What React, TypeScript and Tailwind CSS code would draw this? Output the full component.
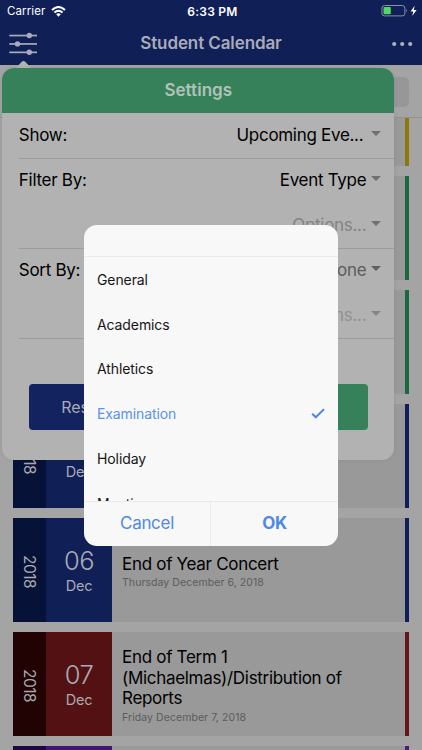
import type { ReactNode } from "react";

type Event = {
  day: string;
  title: string;
  date: string;
  year: string;
  tile: string;
  bar: string;
};

const events: Event[] = [
  { day: "03", title: "", date: "", year: "bg-[#4a4000]", tile: "bg-[#8b7a0b]", bar: "bg-[#8b7a0b]" },
  { day: "04", title: "", date: "", year: "bg-[#0a3a20]", tile: "bg-[#1d693f]", bar: "bg-[#1d693f]" },
  { day: "04", title: "", date: "", year: "bg-[#0a3a20]", tile: "bg-[#1d693f]", bar: "bg-[#1d693f]" },
  { day: "05", title: "", date: "", year: "bg-[#071238]", tile: "bg-[#101f56]", bar: "bg-[#101f5a]" },
  { day: "06", title: "End of Year Concert", date: "Thursday December 6, 2018", year: "bg-[#071238]", tile: "bg-[#101f56]", bar: "bg-[#101f5a]" },
  { day: "07", title: "End of Term 1 (Michaelmas)/Distribution of Reports", date: "Friday December 7, 2018", year: "bg-[#220304]", tile: "bg-[#541113]", bar: "bg-[#641719]" },
  { day: "08", title: "", date: "", year: "bg-[#1d083f]", tile: "bg-[#431577]", bar: "bg-[#4b1785]" },
];

function EventCard({ event }: { event: Event }) {
  return (
    <div className="flex h-[104px] shrink-0 bg-[#999999]">
      <div className={`flex w-[33px] items-center justify-center pt-[2px] pr-[1px] ${event.year}`}>
        <span className="text-[15.5px] leading-none tracking-[-0.5px] text-[#a9a9ad] [writing-mode:vertical-rl]">2018</span>
      </div>
      <div className={`flex w-[66px] flex-col items-center pt-[27px] text-[#a9aab2] ${event.tile}`}>
        <span className="text-[25.5px] leading-[31px] font-light tracking-[-0.5px]">{event.day}</span>
        <span className="mt-[1px] text-[14.5px] leading-[18px] tracking-[-0.3px]">Dec</span>
      </div>
      <div className="flex flex-1 flex-col justify-center pt-[4.5px] pr-8 pl-[10px]">
        <div className="text-[17px] leading-[20.5px] tracking-[-0.3px] text-black">{event.title}</div>
        <div className="text-[10.5px] leading-[17px] tracking-[0.07px] text-[#5c5c5c]">{event.date}</div>
      </div>
      <div className={`w-[4px] ${event.bar}`} />
    </div>
  );
}

type SettingRowProps = { label?: string; value: string; tone?: string; arrow?: string; gap?: string };

function SettingRow({ label, value, tone = "text-black", arrow = "text-[#707070]", gap = "ml-[5px]" }: SettingRowProps) {
  return (
    <div className="flex h-[45px] items-center pt-px pr-[13px]">
      <span className="flex-1 text-[17px] tracking-[-0.28px] text-black">{label}</span>
      <span className={`text-[17px] tracking-[-0.3px] ${tone}`}>{value}</span>
      <svg className={`mb-[5px] ${gap} ${arrow}`} width="10" height="5" viewBox="0 0 10 5">
        <path d="M0 0H10L5 5Z" fill="currentColor" />
      </svg>
    </div>
  );
}

function Group({ children }: { children: ReactNode }) {
  return <div className="-mb-px ml-[16.5px] border-b border-[#9c9ca0]">{children}</div>;
}

const options = ["General", "Academics", "Athletics", "Examination", "Holiday", "Meeting"];

function StatusBar() {
  return (
    <div className="grid h-[22px] grid-cols-3 items-center px-[7px] text-[11.5px] text-white">
      <div className="flex items-center gap-[5px] pt-px">
        <span className="tracking-[0.12px]">Carrier</span>
        <svg width="15" height="11" viewBox="0 0 15 11" fill="none" stroke="white" strokeWidth="2">
          <path d="M1 4Q7.5-2 14 4" />
          <path d="M3.4 6.5Q7.5 2.9 11.6 6.5" />
          <path d="M5.2 8.2Q7.5 6.2 9.8 8.2L7.5 10.7Z" fill="white" stroke="none" />
        </svg>
      </div>
      <span className="pt-px pl-[3px] text-center text-[12px] font-semibold tracking-[0.25px]">6:33 PM</span>
      <div className="flex items-center justify-end">
        <svg className="-mr-[3px]" width="37" height="12" viewBox="0 0 37 12">
          <rect x=".9" y=".5" width="23" height="10.4" rx="2.7" fill="none" stroke="#8990ac" />
          <rect x="2.5" y="2.1" width="7.3" height="7.2" rx="1" fill="#4fd864" />
          <path d="M25.2 3.8Q27 5.7 25.2 7.6Z" fill="#8990ac" />
          <path d="M33.6.8L29.6 6.5H32.3L31.2 11L35.6 4.9H32.8Z" fill="white" />
        </svg>
      </div>
    </div>
  );
}

export default function App() {
  return (
    <div className="relative h-[750px] w-[422px] overflow-hidden bg-[#a4a4a4] font-['Inter','Liberation_Sans',sans-serif]">
      <div className="flex h-full flex-col">
        <header className="h-[65px] shrink-0 bg-[#101f56]">
          <StatusBar />
          <div className="grid h-[43px] grid-cols-[60px_1fr_60px] items-center">
            <svg className="ml-[9px]" width="29" height="24" viewBox="0 0 29 24" fill="#a9abb8">
              <rect x=".3" y="2.7" width="27.7" height="1.7" />
              <rect x=".3" y="11.1" width="27.7" height="1.7" />
              <rect x=".3" y="19.5" width="27.7" height="1.7" />
              <circle cx="20.3" cy="3.5" r="2.7" />
              <circle cx="8.5" cy="11.9" r="2.7" />
              <circle cx="20.3" cy="20.3" r="2.7" />
            </svg>
            <h1 className="text-center text-[17px] font-semibold tracking-[-0.1px] text-[#a9abb8]">Student Calendar</h1>
            <svg className="ml-[29px]" width="24" height="6" viewBox="0 0 24 6" fill="#b0b1bd">
              <circle cx="3.2" cy="3" r="2.1" />
              <circle cx="11.2" cy="3" r="2.1" />
              <circle cx="19.2" cy="3" r="2.1" />
            </svg>
          </div>
        </header>
        <div className="h-[53px] shrink-0 border-b border-[#929292] px-[13px] pt-[12px]">
          <div className="h-[30px] rounded-[5px] bg-[#979797]" />
        </div>
        <main className="flex min-h-0 flex-1 flex-col overflow-hidden px-[13px]">
          <div className="-mt-[55.6px] flex flex-col gap-[10px]">
            {events.map((event, i) => (
              <EventCard key={i} event={event} />
            ))}
          </div>
        </main>
      </div>

      <svg className="absolute top-[60px] left-[15px]" width="17" height="9" viewBox="0 0 17 9">
        <path d="M0 9L6.5 2Q8.5-.2 10.5 2L17 9Z" fill="#b2b2b2" />
      </svg>
      <section className="absolute top-[68.3px] left-[2.3px] flex h-[392px] w-[392px] flex-col overflow-hidden rounded-[12px] bg-[#b2b2b2] shadow-[0_0_4px_rgba(0,0,0,0.08)]">
        <h2 className="flex h-[44.5px] shrink-0 items-center justify-center bg-[#36815a] pt-px text-[17px] font-semibold tracking-[0.05px] text-[#b2c2b9]">Settings</h2>
        <Group>
          <SettingRow label="Show:" value="Upcoming Eve..." gap="ml-[8px]" />
        </Group>
        <Group>
          <SettingRow label="Filter By:" value="Event Type" />
          <SettingRow value="Options..." tone="text-[#828282]" />
        </Group>
        <Group>
          <SettingRow label="Sort By:" value="None" tone="text-[#5c5c5c]" arrow="text-[#606060]" />
          <SettingRow value="Options..." tone="text-[#919191]" arrow="text-[#858585]" />
        </Group>
        <div className="mt-[46.5px] flex justify-between pr-[26px] pl-[27px]">
          <button className="h-[45.5px] w-[160px] rounded-[4px] bg-[#12235f] pl-[32px] text-left text-[16px] tracking-[-0.1px] text-[#a9abb8]">Reset</button>
          <button className="h-[45.5px] w-[160px] rounded-[4px] bg-[#36815a] text-[16px] text-[#b2c2b9]">Apply</button>
        </div>
      </section>

      <section className="absolute top-[225px] left-[84px] flex h-[320.5px] w-[254px] flex-col overflow-hidden rounded-[13px] bg-[#f8f8f8]">
        <div className="h-[32px] shrink-0 border-b border-[#e8ebef]" />
        <ul className="min-h-0 flex-1 overflow-hidden">
          {options.map((option) => (
            <li
              key={option}
              className={`flex h-[44.8px] items-center justify-between pr-[13px] pl-[13px] text-[14px] tracking-[-0.1px] ${option === "Examination" ? "text-[#5b92ea]" : "text-[#161616]"}`}
            >
              {option}
              {option === "Examination" && (
                <svg width="14" height="11" viewBox="0 0 14 11" fill="none" stroke="#4c87e8" strokeWidth="2">
                  <path d="M1.2 5.7L4.8 9.3L13 1.1" />
                </svg>
              )}
            </li>
          ))}
        </ul>
        <div className="grid h-[45px] shrink-0 grid-cols-2 border-t border-[#eaeaea] text-[17px] text-[#5088e8]">
          <button className="border-r border-[#eaeaea] tracking-[-0.3px]">Cancel</button>
          <button className="font-bold tracking-[-0.5px]">OK</button>
        </div>
      </section>
    </div>
  );
}
